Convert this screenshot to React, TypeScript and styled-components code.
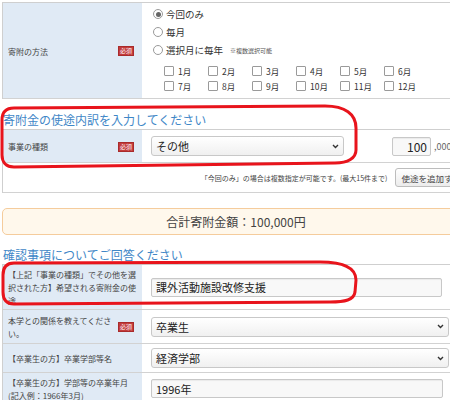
import React from "react";
import styled, { createGlobalStyle } from "styled-components";

const GlobalStyle = createGlobalStyle`
  *, *::before, *::after { box-sizing: border-box; }
  html, body { margin: 0; padding: 0; background: #fff; overflow: hidden; }
  body {
    font-family: "Noto Sans CJK JP", "Noto Sans", sans-serif;
    color: #333;
  }
`;

const Page = styled.div`
  position: relative;
  width: 470px;
  height: 400px;
  padding: 2px 0 0 2px;
`;

const Table = styled.div`
  border-top: 1px solid #cfcfcf;
  border-left: 1px solid #cfcfcf;
`;

const Row = styled.div<{ $h: number }>`
  display: grid;
  grid-template-columns: 139px 1fr;
  min-height: ${(p) => p.$h}px;
  border-bottom: 1px solid #d2d2d2;
`;

const FullRow = styled.div<{ $h: number }>`
  display: flex;
  align-items: center;
  justify-content: flex-end;
  gap: 8px;
  min-height: ${(p) => p.$h}px;
  padding-right: 3px;
  border-bottom: 1px solid #d2d2d2;
`;

const LabelCell = styled.div<{ $top?: boolean }>`
  background: #e0eaf5;
  display: flex;
  align-items: ${(p) => (p.$top ? "flex-start" : "center")};
  justify-content: space-between;
  gap: 4px;
  padding: ${(p) => (p.$top ? "3px 6px 2px 5px" : "3px 8px 2px 5px")};
  font-size: 8px;
  line-height: 13px;
  color: #444;
`;

const LabelText = styled.span`
  flex: 1;
  min-width: 0;
  line-break: anywhere;
`;

const Badge = styled.span`
  flex: none;
  width: 16px;
  height: 10px;
  background: #c33b3b;
  border: 1px solid #a92b2b;
  color: #fff;
  font-size: 6px;
  line-height: 8px;
  text-align: center;
`;

const ValueCell = styled.div`
  display: flex;
  align-items: center;
  padding-left: 9px;
`;

const MethodCell = styled.div`
  display: flex;
  flex-direction: column;
  padding: 2px 0 5px 11px;
`;

const RadioRow = styled.div`
  display: flex;
  align-items: center;
  gap: 3px;
  height: 18px;
  font-size: 9.5px;
  color: #333;
`;

const RadioDot = styled.span<{ $on?: boolean }>`
  width: 10px;
  height: 10px;
  border-radius: 50%;
  border: 1px solid #9a9a9a;
  background: #fff;
  display: flex;
  align-items: center;
  justify-content: center;
  &::after {
    content: "";
    display: ${(p) => (p.$on ? "block" : "none")};
    width: 5px;
    height: 5px;
    border-radius: 50%;
    background: #666;
  }
`;

const Hint = styled.span`
  margin-left: 4px;
  font-size: 6px;
  color: #555;
`;

const MonthGrid = styled.div`
  display: grid;
  grid-template-columns: repeat(6, 44px);
  grid-auto-rows: 15px;
  margin: 4px 0 0 11px;
`;

const Month = styled.div`
  display: flex;
  align-items: center;
  gap: 4px;
  font-size: 8.5px;
  color: #333;
`;

const Check = styled.span`
  width: 10px;
  height: 10px;
  border: 1px solid #9a9a9a;
  border-radius: 1px;
  background: #fff;
`;

const Heading = styled.h2<{ $mt: number }>`
  margin: ${(p) => p.$mt}px 0 2px 1px;
  font-size: 12px;
  line-height: 14px;
  font-weight: 400;
  color: #3f87c7;
`;

const SelectBox = styled.div<{ $w: number }>`
  width: ${(p) => p.$w}px;
  height: 20px;
  border: 1px solid #c8c8c8;
  border-radius: 3px;
  background: linear-gradient(#ffffff, #f0f0f0);
  display: flex;
  align-items: center;
  justify-content: space-between;
  padding: 0 4px 0 4px;
  font-size: 11px;
  color: #222;
`;

const TextBox = styled.div<{ $w: number; $right?: boolean }>`
  width: ${(p) => p.$w}px;
  height: 19px;
  border: 1px solid #c8c8c8;
  border-radius: 2px;
  background: #f8f8f8;
  box-shadow: inset 0 1px 1px rgba(0, 0, 0, 0.06);
  display: flex;
  align-items: center;
  justify-content: ${(p) => (p.$right ? "flex-end" : "flex-start")};
  padding: 0 3px 0 4px;
  font-size: 11px;
  color: #222;
`;

const AmountBox = styled(TextBox)`
  margin-left: 48px;
  font-size: 12px;
`;

const Unit = styled.span`
  margin-left: 3px;
  font-size: 9px;
  color: #666;
`;

const Note = styled.span`
  font-size: 7px;
  color: #444;
`;

const AddButton = styled.button`
  height: 19px;
  padding: 0 5px;
  border: 1px solid #bdbdbd;
  border-radius: 3px;
  background: linear-gradient(#ffffff, #ececec);
  font-family: inherit;
  font-size: 8.5px;
  color: #444;
  white-space: nowrap;
`;

const TotalBox = styled.div`
  margin-top: 15px;
  height: 27px;
  border: 1px solid #f5cc9c;
  border-radius: 5px;
  background: #fff8ec;
  display: flex;
  align-items: center;
  justify-content: center;
  font-size: 12px;
  color: #444;
`;

const Marks = styled.svg`
  position: absolute;
  left: 0;
  top: 0;
  pointer-events: none;
`;

const Chevron = () => (
  <svg width="7" height="5" viewBox="0 0 7 5">
    <polyline points="1,1 3.5,3.5 6,1" fill="none" stroke="#333" strokeWidth="1.4" />
  </svg>
);

const months = ["1月", "2月", "3月", "4月", "5月", "6月", "7月", "8月", "9月", "10月", "11月", "12月"];

export default function App() {
  return (
    <>
      <GlobalStyle />
      <Page>
        <Table>
          <Row $h={96}>
            <LabelCell>
              <LabelText>寄附の方法</LabelText>
              <Badge>必須</Badge>
            </LabelCell>
            <MethodCell>
              <RadioRow>
                <RadioDot $on />
                今回のみ
              </RadioRow>
              <RadioRow>
                <RadioDot />
                毎月
              </RadioRow>
              <RadioRow>
                <RadioDot />
                選択月に毎年
                <Hint>※複数選択可能</Hint>
              </RadioRow>
              <MonthGrid>
                {months.map((m) => (
                  <Month key={m}>
                    <Check />
                    {m}
                  </Month>
                ))}
              </MonthGrid>
            </MethodCell>
          </Row>
        </Table>

        <Heading $mt={14}>寄附金の使途内訳を入力してください</Heading>
        <Table>
          <Row $h={33}>
            <LabelCell>
              <LabelText>事業の種類</LabelText>
              <Badge>必須</Badge>
            </LabelCell>
            <ValueCell>
              <SelectBox $w={193}>
                その他
                <Chevron />
              </SelectBox>
              <AmountBox $w={39} $right>
                100
              </AmountBox>
              <Unit>,000</Unit>
            </ValueCell>
          </Row>
          <FullRow $h={30}>
            <Note>「今回のみ」の場合は複数指定が可能です。(最大15件まで)</Note>
            <AddButton>使途を追加する</AddButton>
          </FullRow>
        </Table>

        <TotalBox>合計寄附金額：100,000円</TotalBox>

        <Heading $mt={13}>確認事項についてご回答ください</Heading>
        <Table>
          <Row $h={44}>
            <LabelCell $top>
              <LabelText>【上記「事業の種類」でその他を選択された方】希望される寄附金の使途</LabelText>
            </LabelCell>
            <ValueCell>
              <TextBox $w={291}>課外活動施設改修支援</TextBox>
            </ValueCell>
          </Row>
          <Row $h={34}>
            <LabelCell>
              <LabelText>本学との関係を教えてください。</LabelText>
              <Badge>必須</Badge>
            </LabelCell>
            <ValueCell>
              <SelectBox $w={298}>
                卒業生
                <Chevron />
              </SelectBox>
            </ValueCell>
          </Row>
          <Row $h={29}>
            <LabelCell>
              <LabelText>【卒業生の方】卒業学部等名</LabelText>
            </LabelCell>
            <ValueCell>
              <SelectBox $w={298}>
                経済学部
                <Chevron />
              </SelectBox>
            </ValueCell>
          </Row>
          <Row $h={31}>
            <LabelCell>
              <LabelText>
                【卒業生の方】学部等の卒業年月
                <br />
                (記入例：1966年3月)
              </LabelText>
            </LabelCell>
            <ValueCell>
              <TextBox $w={292}>1996年</TextBox>
            </ValueCell>
          </Row>
        </Table>

        <Marks width="470" height="400" viewBox="0 0 470 400">
          <path
            d="M14 108 L325 106 C345 106 356 114 356 128 L356 150 C356 158 348 163 335 163 L14 167 C6 167 2 162 2 155 L2 120 C2 112 6 108 14 108 Z"
            fill="none"
            stroke="#e8141c"
            strokeWidth="3"
          />
          <path
            d="M14 263 L320 262 C345 262 356 268 356 280 L355 292 C354 300 345 302 330 302 L14 304 C6 304 3 299 3 292 L3 275 C3 267 7 263 14 263 Z"
            fill="none"
            stroke="#e8141c"
            strokeWidth="3"
          />
        </Marks>
      </Page>
    </>
  );
}
